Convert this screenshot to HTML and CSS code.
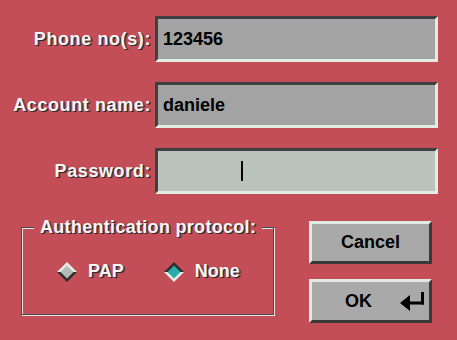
FILE: index.html
```html
<!DOCTYPE html>
<html>
<head>
<meta charset="utf-8">
<link rel="stylesheet" href="styles.css">
</head>
<body>
<div class="dialog">
  <div class="form">
    <label class="label">Phone no(s):</label>
    <div class="field">123456</div>
    <label class="label">Account name:</label>
    <div class="field">daniele</div>
    <label class="label">Password:</label>
    <div class="field field-active"><span class="caret"></span></div>
  </div>
  <div class="bottom">
    <fieldset class="group">
      <legend class="legend">Authentication protocol:</legend>
      <div class="radios">
        <div class="radio">
          <svg class="diamond" width="20" height="20" viewBox="0 0 20 20">
            <polygon points="0,10 10,0 20,10" fill="#e8eee8"/>
            <polygon points="0,10 10,20 20,10" fill="#2e2e2e"/>
            <polygon points="3.5,10 10,3.5 16.5,10 10,16.5" fill="#b4bab4"/>
          </svg>
          <span class="radio-text">PAP</span>
        </div>
        <div class="radio">
          <svg class="diamond" width="20" height="20" viewBox="0 0 20 20">
            <polygon points="0,10 10,0 20,10" fill="#2e2e2e"/>
            <polygon points="0,10 10,20 20,10" fill="#e8eee8"/>
            <polygon points="3.5,10 10,3.5 16.5,10 10,16.5" fill="#2aaaa8"/>
          </svg>
          <span class="radio-text">None</span>
        </div>
      </div>
    </fieldset>
    <div class="buttons">
      <button class="btn btn-cancel">Cancel</button>
      <button class="btn btn-ok"><span>OK</span>
        <svg class="enter" width="26" height="20" viewBox="0 0 26 20">
          <polygon points="0,12 10,4 10,20" fill="#000"/>
          <rect x="9" y="10.5" width="15" height="3" fill="#000"/>
          <rect x="21" y="1" width="3" height="12.5" fill="#000"/>
        </svg>
      </button>
    </div>
  </div>
</div>
</body>
</html>
```
FILE: styles.css
```css
html, body {
  margin: 0;
  padding: 0;
  background: #c44e58;
}
body {
  width: 457px;
  height: 340px;
  overflow: hidden;
  font-family: "Liberation Sans", Arial, sans-serif;
  font-weight: bold;
  font-size: 18px;
}
.dialog {
  padding-top: 16px;
}
.form {
  display: grid;
  grid-template-columns: 151px 283px;
  column-gap: 4px;
  row-gap: 20px;
}
.label {
  justify-self: end;
  align-self: center;
  color: #f6f6f6;
  text-shadow: 1px 1px 0 #2c2c2c, 2px 1px 0 rgba(40,40,40,0.45);
  letter-spacing: 0.6px;
}
.field {
  box-sizing: border-box;
  height: 46px;
  background: #a3a3a3;
  border-style: solid;
  border-width: 3px;
  border-color: #3c4040 #e2ece2 #e2ece2 #3c4040;
  padding-left: 5px;
  display: flex;
  align-items: center;
  color: #000;
}
.field-active {
  background: #bcc3bc;
  padding-left: 83px;
}
.caret {
  display: block;
  width: 2px;
  height: 20px;
  background: #000;
}
.bottom {
  display: flex;
  align-items: flex-start;
  margin-top: 23px;
  padding-left: 21px;
}
.group {
  box-sizing: border-box;
  width: 253px;
  height: 98px;
  margin: 0;
  padding: 0;
  border: 1px solid #4a4a4a;
  box-shadow: 1px 1px 0 #e4e8e4, inset 1px 1px 0 #e4e8e4;
}
.legend {
  margin-left: 12px;
  padding: 0 6px;
  line-height: 20px;
  background: #c44e58;
  color: #f6f6f6;
  text-shadow: 1px 1px 0 #2c2c2c, 2px 1px 0 rgba(40,40,40,0.45);
  letter-spacing: 0.3px;
}
.radios {
  display: flex;
  align-items: center;
  gap: 40px;
  padding-left: 35px;
  padding-top: 24px;
}
.radio {
  display: flex;
  align-items: center;
  gap: 11px;
}
.diamond {
  display: block;
}
.radio-text {
  color: #f6f6f6;
  text-shadow: 1px 1px 0 #2c2c2c, 2px 1px 0 rgba(40,40,40,0.45);
}
.buttons {
  display: flex;
  flex-direction: column;
  gap: 15px;
  margin-left: 35px;
  margin-top: 4px;
}
.btn {
  box-sizing: border-box;
  width: 123px;
  background: #a9a9a9;
  border-style: solid;
  border-width: 3px;
  border-color: #e2ece2 #3a3a3a #3a3a3a #e2ece2;
  font-family: "Liberation Sans", Arial, sans-serif;
  font-weight: bold;
  font-size: 18px;
  color: #000;
  padding: 0;
  margin: 0;
}
.btn-cancel {
  height: 43px;
}
.btn-ok {
  height: 44px;
  display: flex;
  align-items: center;
  justify-content: space-between;
  padding-left: 33px;
  padding-right: 3px;
}
.enter {
  display: block;
}
```
